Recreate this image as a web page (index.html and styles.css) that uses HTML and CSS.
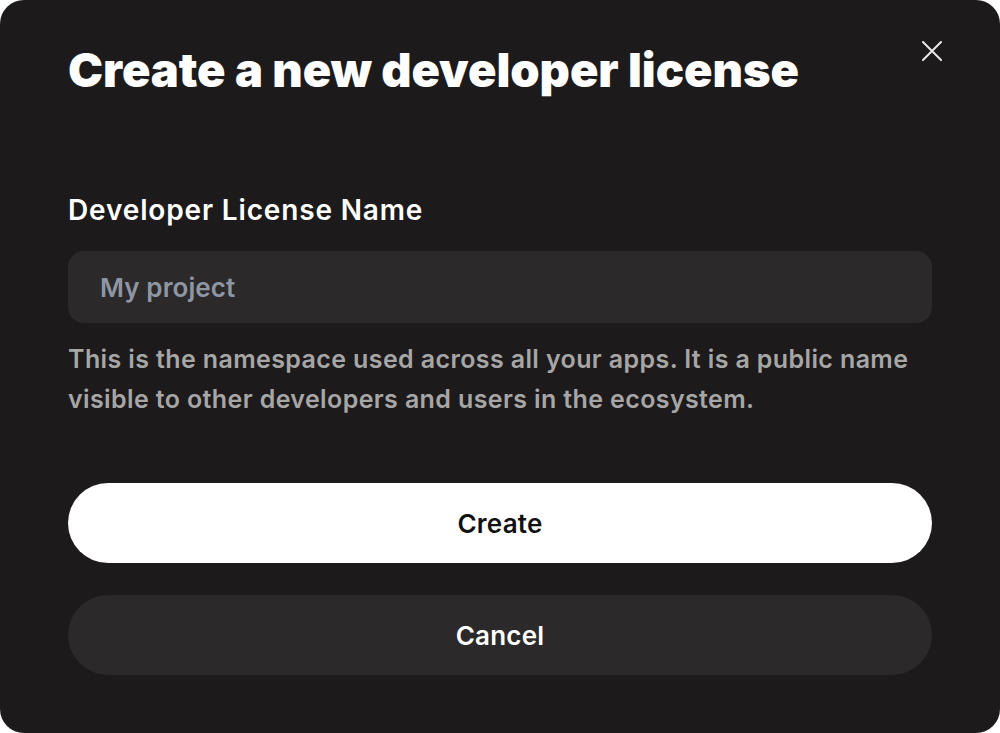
FILE: index.html
```html
<!DOCTYPE html>
<html>
  <head>
    <meta charset="utf-8">
    <title>Create a new developer license</title>
    <link rel="stylesheet" href="styles.css">
  </head>
  <body>
    <div class="modal">
      <div class="modal-head">
        <h1 class="title">Create a new developer license</h1>
        <button class="close" aria-label="Close">
          <svg width="20" height="20" viewBox="0 0 20 20">
            <path d="M1 1 L19 19 M19 1 L1 19" stroke="#e8e8e8" stroke-width="2" stroke-linecap="round"/>
          </svg>
        </button>
      </div>

      <label class="field-label" for="name">Developer License Name</label>
      <input class="field" id="name" type="text" placeholder="My project">
      <p class="hint">This is the namespace used across all your apps. It is a public name visible to other developers and users in the ecosystem.</p>

      <div class="actions">
        <button class="btn btn-primary">Create</button>
        <button class="btn btn-secondary">Cancel</button>
      </div>
    </div>
  </body>
</html>
```

FILE: styles.css
```css
html, body {
  margin: 0;
  background: #ffffff;
}
.modal {
  box-sizing: border-box;
  width: 1000px;
  height: 733px;
  padding: 38px 68px 0 68px;
  background-color: #1c1a1b;
  border-radius: 24px;
  font-family: Inter, "Noto Sans", sans-serif;
  color: #ffffff;
}
.modal-head {
  display: flex;
  justify-content: space-between;
  align-items: flex-start;
}
.title {
  margin: 0;
  font-size: 47px;
  font-weight: 900;
  letter-spacing: -0.05px;
  line-height: 64px;
  white-space: nowrap;
}
.close {
  margin: 3px -10px 0 0;
  padding: 0;
  border: 0;
  background: none;
  width: 20px;
  height: 20px;
}
.field-label {
  display: block;
  margin-top: 88px;
  font-size: 28px;
  font-weight: 600;
  letter-spacing: 0.85px;
  line-height: 40px;
}
.field {
  display: block;
  box-sizing: border-box;
  width: 100%;
  height: 72px;
  margin-top: 21px;
  padding: 0 32px;
  border: 0;
  outline: none;
  border-radius: 16px;
  background-color: #2c292a;
  font-family: Inter, "Noto Sans", sans-serif;
  font-size: 26px;
  font-weight: 600;
  letter-spacing: 0.1px;
  color: #ffffff;
}
.field::placeholder {
  color: #8f96a3;
}
.hint {
  margin: 16px 0 0 0;
  font-size: 25px;
  font-weight: 600;
  letter-spacing: 0.38px;
  line-height: 40px;
  color: #a7a6a6;
}
.actions {
  display: flex;
  flex-direction: column;
  gap: 32px;
  margin-top: 64px;
}
.btn {
  height: 80px;
  border: 0;
  border-radius: 40px;
  font-family: Inter, "Noto Sans", sans-serif;
  font-size: 26px;
  font-weight: 600;
  letter-spacing: 0.2px;
}
.btn-primary {
  background-color: #ffffff;
  color: #111111;
}
.btn-secondary {
  background-color: #2c292a;
  color: #ffffff;
}
```
